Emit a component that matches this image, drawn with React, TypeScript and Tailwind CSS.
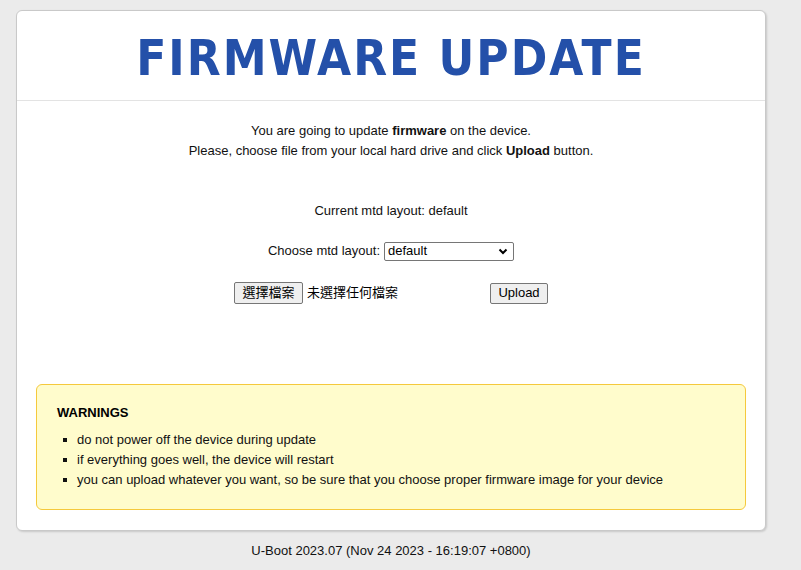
import type { FC } from "react"

const warnings = [
    "do not power off the device during update",
    "if everything goes well, the device will restart",
    "you can upload whatever you want, so be sure that you choose proper firmware image for your device",
]

const App: FC = () => {
    return (
        <div className="min-h-[570px] bg-[#ebebeb] pt-[10px] text-[13px] text-[#111] font-['Liberation_Sans',Arial,sans-serif]">
            {/* main card */}
            <div className="ml-[16px] w-[750px] rounded-[6px] border border-[#c9c9c9] bg-white shadow-[1px_1px_2px_rgba(0,0,0,0.15)]">
                {/* header */}
                <div className="h-[90px] border-b border-[#e3e3e3] flex items-center justify-center">
                    <h1 className="text-[49px] leading-none font-bold tracking-[2px] text-[#2450a9] font-['DejaVu_Sans_Condensed','DejaVu_Sans',sans-serif] mt-[6px]">
                        FIRMWARE UPDATE
                    </h1>
                </div>

                <div className="px-[19px] pt-[20px] pb-[20px]">
                    <div className="text-center leading-[20px]">
                        <p>
                            You are going to update <b>firmware</b> on the device.
                        </p>
                        <p>
                            Please, choose file from your local hard drive and click <b>Upload</b> button.
                        </p>
                    </div>

                    <p className="mt-[40px] text-center leading-[20px]">Current mtd layout: default</p>

                    <div className="mt-[20px] h-[20px] flex items-center justify-center">
                        <span>Choose mtd layout:</span>
                        <div className="ml-[4px] w-[130px] h-[19px] border border-[#767676] rounded-[2px] bg-white flex items-center justify-between pl-[3px] pr-[5px] text-[13px] text-black">
                            <span>default</span>
                            <svg width="10" height="7" viewBox="0 0 10 7">
                                <path d="M1.5 1.5 L5 5 L8.5 1.5" fill="none" stroke="#000" strokeWidth="2" />
                            </svg>
                        </div>
                    </div>

                    <div className="mt-[21px] flex items-center justify-center">
                        <div className="w-[256px] flex items-center">
                            <div className="h-[22px] w-[69px] border border-[#767676] rounded-[2px] bg-[#efefef] flex items-center justify-center text-[13px] text-black font-['Liberation_Sans','Noto_Sans_CJK_TC',sans-serif]">
                                選擇檔案
                            </div>
                            <span className="ml-[4px] text-[13px] text-black font-['Liberation_Sans','Noto_Sans_CJK_TC',sans-serif]">
                                未選擇任何檔案
                            </span>
                        </div>
                        <div className="h-[21px] w-[58px] border border-[#767676] rounded-[2px] bg-[#efefef] flex items-center justify-center text-[13px] text-black">
                            Upload
                        </div>
                    </div>

                    {/* warnings */}
                    <div className="mt-[80px] rounded-[6px] border border-[#f5c93c] bg-[#fffccc] pl-[20px] pt-[18px] pb-[19px]">
                        <div className="text-[13px] font-bold leading-[20px] text-black">WARNINGS</div>
                        <ul className="mt-[7px]">
                            {warnings.map((w) => (
                                <li key={w} className="flex items-center leading-[20px]">
                                    <span className="ml-[6px] mr-[10px] w-[4px] h-[4px] bg-[#111]" />
                                    {w}
                                </li>
                            ))}
                        </ul>
                    </div>
                </div>
            </div>

            <p className="w-[750px] ml-[16px] mt-[11px] text-center leading-[18px]">
                U-Boot 2023.07 (Nov 24 2023 - 16:19:07 +0800)
            </p>
        </div>
    )
}

export default App
